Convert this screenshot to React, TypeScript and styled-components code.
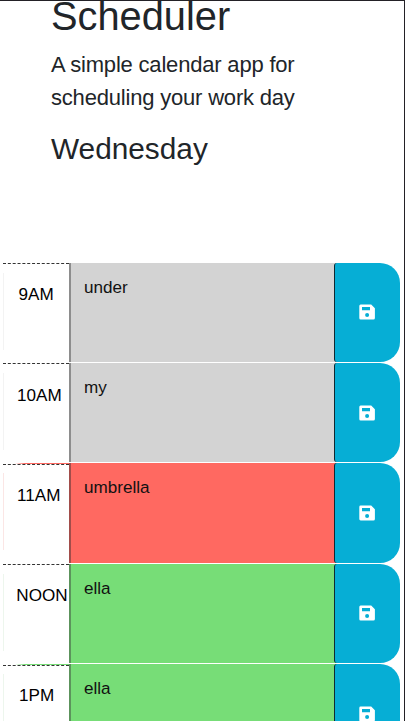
import React from "react";
import styled, { createGlobalStyle } from "styled-components";

const GlobalStyle = createGlobalStyle`
  * { box-sizing: border-box; }
  body { margin: 0; background: #fff; overflow: hidden; }
`;

const Page = styled.main`
  width: 405px;
  height: 721px;
  overflow: hidden;
  border-top: 1px solid #232126;
  border-right: 1px solid #232126;
  background: #fff;
  color: #212529;
  font-family: "Liberation Sans", Arial, sans-serif;
`;

const Header = styled.header`
  height: 261.7px;
  padding-left: 51px;
`;

const Title = styled.h1`
  margin: 0;
  height: 47px;
  font-size: 39.8px;
  font-weight: 400;
  line-height: 31px;
`;

const Lead = styled.p`
  margin: 0;
  width: 280px;
  font-size: 22px;
  letter-spacing: -0.19px;
  line-height: 33px;
`;

const Today = styled.p`
  margin: 17px 0 0;
  font-size: 29.8px;
  line-height: 36px;
`;

const TimeBlocks = styled.section`
  display: flex;
  flex-direction: column;
  gap: 1px;
  padding-left: 3px;
`;

const tones = { past: "#d3d3d3", present: "#ff6961", future: "#77dd77" };
const edges = { past: "#8d8d8d", present: "#a24d4a", future: "#5c935c" };
const tints = { past: "#f3f3f3", present: "#fbe6e5", future: "#edf6ed" };
type Tone = keyof typeof tones;

const Row = styled.div`
  display: grid;
  grid-template-columns: 66px 265px 66px;
  height: 99.3px;
`;

const HourCell = styled.div<{ $tone: Tone; $rim?: boolean }>`
  padding-top: ${(p) => (p.$rim ? 1 : 0)}px;
  background:
    linear-gradient(${(p) => tints[p.$tone]}, ${(p) => tints[p.$tone]}) 0 10px / 1px 77px no-repeat,
    linear-gradient(90deg, transparent, ${(p) => (p.$rim ? tones[p.$tone] : "transparent")} 10px) 12px 0 / 54px 1px no-repeat;
`;

const Hour = styled.div<{ $indent: number; $rim?: boolean }>`
  padding: ${(p) => (p.$rim ? 20.6 : 21.6)}px 0 0 ${(p) => p.$indent}px;
  border-top: 1px dashed #333;
  color: #000;
  font-size: 17.1px;
  line-height: 20px;
  white-space: nowrap;
`;

const Entry = styled.div<{ $tone: Tone }>`
  padding: 15px 0 0 13px;
  background: ${(p) => tones[p.$tone]};
  border-left: 2px solid ${(p) => edges[p.$tone]};
  color: #111;
  font-size: 17.1px;
  line-height: 20px;
`;

const SaveCell = styled.div<{ $tone: Tone }>`
  background: linear-gradient(90deg, ${(p) => tones[p.$tone]} 6px, #fff 6px);
`;

const SaveButton = styled.button`
  display: flex;
  align-items: center;
  justify-content: center;
  width: 66px;
  height: 100%;
  padding: 0 2px 0 0;
  border: 0;
  border-left: 1px solid #102a32;
  border-radius: 3px 20px 20px 3px;
  background: #06aed5;
  color: #fff;
`;

const SaveIcon = () => (
  <svg width="16" height="16" viewBox="0 0 16 16" aria-hidden="true">
    <path
      fill="currentColor"
      fillRule="evenodd"
      d="M2 .5h10.2L15.9 4.2V14a1.5 1.5 0 0 1-1.5 1.5H2A1.5 1.5 0 0 1 .3 14V2A1.5 1.5 0 0 1 2 .5ZM3 3v3.2h8V3H3Zm5.1 6a2 2 0 1 0 0 4 2 2 0 0 0 0-4Z"
    />
  </svg>
);

const blocks: { hour: string; text: string; tone: Tone; indent: number; rim?: boolean }[] = [
  { hour: "9AM", text: "under", tone: "past", indent: 15.5 },
  { hour: "10AM", text: "my", tone: "past", indent: 14 },
  { hour: "11AM", text: "umbrella", tone: "present", indent: 14, rim: true },
  { hour: "NOON", text: "ella", tone: "future", indent: 13.3 },
  { hour: "1PM", text: "ella", tone: "future", indent: 16, rim: true },
];

export default function App() {
  return (
    <>
      <GlobalStyle />
      <Page>
        <Header>
          <Title>Scheduler</Title>
          <Lead>A simple calendar app for scheduling your work day</Lead>
          <Today>Wednesday</Today>
        </Header>
        <TimeBlocks>
          {blocks.map((block) => (
            <Row key={block.hour}>
              <HourCell $tone={block.tone} $rim={block.rim}>
                <Hour $indent={block.indent} $rim={block.rim}>
                  {block.hour}
                </Hour>
              </HourCell>
              <Entry $tone={block.tone}>{block.text}</Entry>
              <SaveCell $tone={block.tone}>
                <SaveButton aria-label="Save">
                  <SaveIcon />
                </SaveButton>
              </SaveCell>
            </Row>
          ))}
        </TimeBlocks>
      </Page>
    </>
  );
}
